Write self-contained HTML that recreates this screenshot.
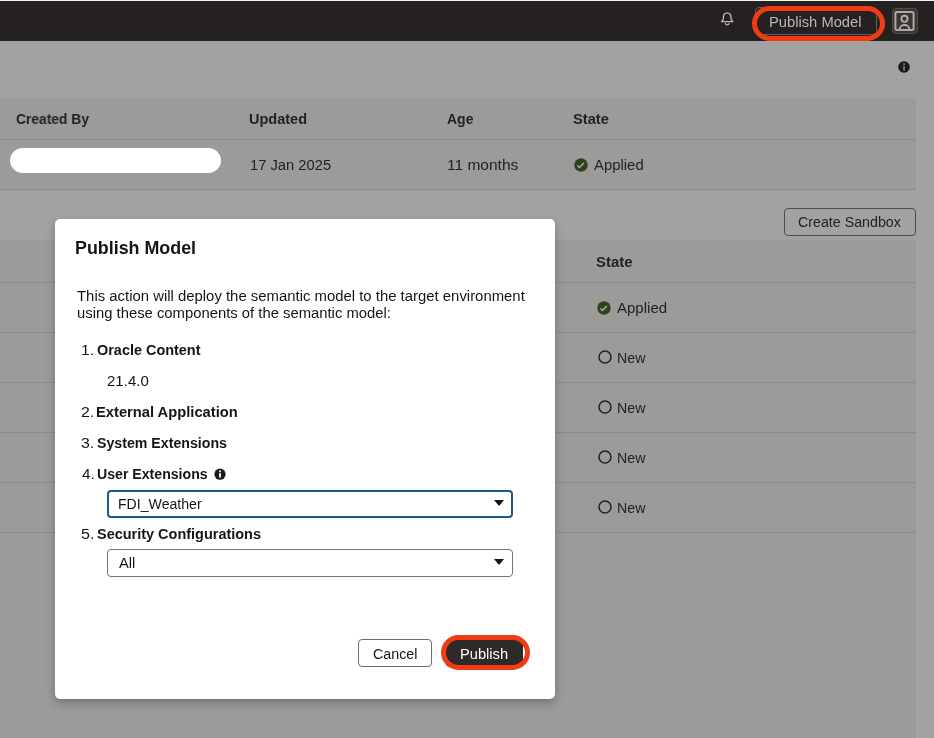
<!DOCTYPE html>
<html><head><meta charset="utf-8">
<style>
*{box-sizing:border-box;margin:0;padding:0}
html,body{width:934px;height:738px;overflow:hidden}
body{background:#a2a2a2;font-family:"Liberation Sans",sans-serif;color:#161513;position:relative;font-size:14px}
.abs{position:absolute}
.t{position:absolute;white-space:nowrap;line-height:20px;height:20px;transform-origin:0 50%;will-change:transform}
.tbl{position:absolute;left:0;width:916px;background:#9d9b99}
.hl{position:absolute;left:0;width:916px;height:1px;background:#8e8c8a}
.ring{width:14px;height:14px;border:1.5px solid #242220;border-radius:50%}
</style></head><body>
<div class="abs" style="left:0;top:0;width:934px;height:1px;background:#f4f4f4"></div>
<div class="abs" style="left:0;top:1px;width:934px;height:40px;background:#242120"></div>

<!-- bell -->
<svg class="abs" style="left:719px;top:10px" width="17" height="18" viewBox="0 0 17 18"><path d="M8.2 2.8 C5.4 2.8 4.4 5 4.4 7.2 L4.4 9 L2.7 11.7 L13.7 11.7 L12 9 L12 7.2 C12 5 11 2.8 8.2 2.8 Z" fill="none" stroke="#bdbbb9" stroke-width="1.3" stroke-linejoin="round"/><path d="M6.4 13.6 C6.8 15.3 9.6 15.3 10 13.6" fill="none" stroke="#bdbbb9" stroke-width="1.3" stroke-linecap="round"/></svg>

<!-- publish model button -->
<div class="abs" style="left:755px;top:7px;width:122px;height:28px;border:1px solid #5f5c5a;border-radius:4px"></div>
<div class="abs" style="left:752px;top:6px;width:133px;height:35px;border:5px solid #f03b14;border-radius:17.5px"></div>

<!-- avatar -->
<div class="abs" style="left:892px;top:8px;width:26px;height:26px;border:1px solid #4f4d4c;border-radius:4px;background:#393533"></div>
<svg class="abs" style="left:893px;top:9px" width="24" height="24" viewBox="0 0 24 24"><rect x="2.4" y="2.9" width="18.2" height="18.1" rx="1.5" fill="none" stroke="#acaaa8" stroke-width="2"/><circle cx="11.5" cy="9.8" r="3.1" fill="none" stroke="#acaaa8" stroke-width="1.9"/><path d="M6.6 20.4 C6.6 14.6 16.4 14.6 16.4 20.4" fill="none" stroke="#acaaa8" stroke-width="1.9"/></svg>

<!-- info icon top right -->
<svg class="abs" style="left:898px;top:61px" width="12" height="12" viewBox="0 0 12 12"><circle cx="6" cy="6" r="5.8" fill="#1b1a19"/><rect x="5.1" y="5" width="1.9" height="4.6" fill="#777"/><rect x="5.1" y="2.2" width="1.9" height="1.8" fill="#777"/></svg>

<!-- table 1 -->
<div class="tbl" style="top:98px;height:92px"></div>
<div class="hl" style="top:139px"></div>
<div class="hl" style="top:189px"></div>
<div class="abs" style="left:10px;top:148px;width:211px;height:25px;border-radius:12.5px;background:#fff"></div>
<svg class="abs" style="left:574.3px;top:157.8px" width="14" height="14" viewBox="0 0 14 14"><circle cx="7" cy="7" r="6.75" fill="#2c4419"/><path d="M3.4 7.4 L5.4 9.6 L9.9 5" fill="none" stroke="#b3b1af" stroke-width="1.4"/></svg>

<!-- create sandbox -->
<div class="abs" style="left:784px;top:208px;width:132px;height:28px;border:1px solid #504d4a;border-radius:4px"></div>

<!-- table 2 -->
<div class="tbl" style="top:240px;height:498px"></div>
<div class="hl" style="top:282px"></div>
<div class="hl" style="top:332px"></div>
<div class="hl" style="top:382px"></div>
<div class="hl" style="top:432px"></div>
<div class="hl" style="top:482px"></div>
<div class="hl" style="top:532px"></div>
<svg class="abs" style="left:597.25px;top:300.5px" width="14" height="14" viewBox="0 0 14 14"><circle cx="7" cy="7" r="6.75" fill="#2c4419"/><path d="M3.4 7.4 L5.4 9.6 L9.9 5" fill="none" stroke="#b3b1af" stroke-width="1.4"/></svg>
<svg class="abs" style="left:596.60px;top:348.90px" width="16" height="16" viewBox="0 0 16 16"><circle cx="8" cy="8" r="6.0" fill="none" stroke="#242220" stroke-width="1.5"/></svg>
<svg class="abs" style="left:596.60px;top:398.90px" width="16" height="16" viewBox="0 0 16 16"><circle cx="8" cy="8" r="6.0" fill="none" stroke="#242220" stroke-width="1.5"/></svg>
<svg class="abs" style="left:596.60px;top:448.90px" width="16" height="16" viewBox="0 0 16 16"><circle cx="8" cy="8" r="6.0" fill="none" stroke="#242220" stroke-width="1.5"/></svg>
<svg class="abs" style="left:596.60px;top:498.90px" width="16" height="16" viewBox="0 0 16 16"><circle cx="8" cy="8" r="6.0" fill="none" stroke="#242220" stroke-width="1.5"/></svg>

<!-- dialog -->
<div class="abs" style="left:55px;top:219px;width:500px;height:480px;background:#fff;border-radius:5px;box-shadow:0 4px 10px rgba(0,0,0,.26)"></div>
<svg class="abs" style="left:214px;top:468px" width="12" height="12" viewBox="0 0 12 12"><circle cx="6" cy="6.2" r="5.6" fill="#1b1a19"/><rect x="5.1" y="5.2" width="1.8" height="4.4" fill="#fff"/><rect x="5.1" y="2.5" width="1.8" height="1.7" fill="#fff"/></svg>

<div class="abs" style="left:107px;top:490px;width:406px;height:28px;border:2px solid #1f5a86;border-radius:4px;background:#fff"></div>
<svg class="abs" style="left:494px;top:500px" width="10" height="6" viewBox="0 0 11 6" preserveAspectRatio="none"><path d="M0 0 L11 0 L5.5 6 Z" fill="#161513"/></svg>
<div class="abs" style="left:107px;top:549px;width:406px;height:28px;border:1px solid #757371;border-radius:4px;background:#fff"></div>
<svg class="abs" style="left:494px;top:559px" width="10" height="6" viewBox="0 0 11 6" preserveAspectRatio="none"><path d="M0 0 L11 0 L5.5 6 Z" fill="#161513"/></svg>

<!-- buttons -->
<div class="abs" style="left:358px;top:639px;width:74px;height:28px;border:1px solid #6f6c69;border-radius:4px;background:#fff"></div>
<div class="abs" style="left:446px;top:639px;width:77px;height:28px;border-radius:4px;background:#2e2a28"></div>
<div class="abs" style="left:441px;top:635px;width:89px;height:35px;border:5px solid #f03b14;border-radius:17.5px"></div>
<div class="t" style="left:769.00px;top:12.00px;font-size:14px;color:#b9b7b5;transform:scaleX(1.0517)">Publish Model</div>
<div class="t" style="left:16.00px;top:109.00px;font-size:14px;font-weight:bold;color:#242220;transform:scaleX(0.9868)">Created By</div>
<div class="t" style="left:249.00px;top:109.00px;font-size:14px;font-weight:bold;color:#242220;transform:scaleX(1.0360)">Updated</div>
<div class="t" style="left:447.00px;top:109.00px;font-size:14px;font-weight:bold;color:#242220;transform:scaleX(0.9944)">Age</div>
<div class="t" style="left:573.00px;top:109.00px;font-size:14px;font-weight:bold;color:#242220;transform:scaleX(1.0484)">State</div>
<div class="t" style="left:250.00px;top:155.00px;font-size:14px;color:#242220;transform:scaleX(1.0520)">17 Jan 2025</div>
<div class="t" style="left:447.00px;top:155.00px;font-size:14px;color:#242220;transform:scaleX(1.1085)">11 months</div>
<div class="t" style="left:594.00px;top:155.00px;font-size:14px;color:#242220;transform:scaleX(1.0633)">Applied</div>
<div class="t" style="left:798.00px;top:212.00px;font-size:14px;color:#242220;transform:scaleX(1.0166)">Create Sandbox</div>
<div class="t" style="left:596.00px;top:252.00px;font-size:14px;font-weight:bold;color:#242220;transform:scaleX(1.0665)">State</div>
<div class="t" style="left:617.00px;top:298.00px;font-size:14px;color:#242220;transform:scaleX(1.0726)">Applied</div>
<div class="t" style="left:617.00px;top:348.00px;font-size:14px;color:#242220;transform:scaleX(1.0131)">New</div>
<div class="t" style="left:617.00px;top:398.00px;font-size:14px;color:#242220;transform:scaleX(1.0131)">New</div>
<div class="t" style="left:617.00px;top:448.00px;font-size:14px;color:#242220;transform:scaleX(1.0131)">New</div>
<div class="t" style="left:617.00px;top:498.00px;font-size:14px;color:#242220;transform:scaleX(1.0131)">New</div>
<div class="t" style="left:75.00px;top:238.00px;font-size:17.5px;font-weight:bold;color:#161513;transform:scaleX(1.0208)">Publish Model</div>
<div class="t" style="left:77.00px;top:286.00px;font-size:14px;color:#161513;transform:scaleX(1.0636)">This action will deploy the semantic model to the target environment</div>
<div class="t" style="left:77.00px;top:303.00px;font-size:14px;color:#161513;transform:scaleX(1.0588)">using these components of the semantic model:</div>
<div class="t" style="left:81.00px;top:340.00px;font-size:14px;color:#161513;transform:scaleX(1.1183)">1.</div>
<div class="t" style="left:97.00px;top:340.00px;font-size:14px;font-weight:bold;color:#161513;transform:scaleX(1.0314)">Oracle Content</div>
<div class="t" style="left:107.00px;top:371.00px;font-size:14px;color:#161513;transform:scaleX(1.0727)">21.4.0</div>
<div class="t" style="left:81.00px;top:402.00px;font-size:14px;color:#161513;transform:scaleX(1.1374)">2.</div>
<div class="t" style="left:96.00px;top:402.00px;font-size:14px;font-weight:bold;color:#161513;transform:scaleX(1.0510)">External Application</div>
<div class="t" style="left:81.00px;top:433.00px;font-size:14px;color:#161513;transform:scaleX(1.1352)">3.</div>
<div class="t" style="left:97.00px;top:433.00px;font-size:14px;font-weight:bold;color:#161513;transform:scaleX(1.0119)">System Extensions</div>
<div class="t" style="left:82.00px;top:464.00px;font-size:14px;color:#161513;transform:scaleX(1.0962)">4.</div>
<div class="t" style="left:97.00px;top:464.00px;font-size:14px;font-weight:bold;color:#161513;transform:scaleX(1.0085)">User Extensions</div>
<div class="t" style="left:118.00px;top:494.00px;font-size:14px;color:#161513;transform:scaleX(1.0081)">FDI_Weather</div>
<div class="t" style="left:81.00px;top:524.00px;font-size:14px;color:#161513;transform:scaleX(1.1501)">5.</div>
<div class="t" style="left:97.00px;top:524.00px;font-size:14px;font-weight:bold;color:#161513;transform:scaleX(1.0335)">Security Configurations</div>
<div class="t" style="left:119.00px;top:553.00px;font-size:14px;color:#161513;transform:scaleX(1.0507)">All</div>
<div class="t" style="left:373.00px;top:644.00px;font-size:14px;color:#161513;transform:scaleX(1.0184)">Cancel</div>
<div class="t" style="left:460.00px;top:644.00px;font-size:14px;color:#ffffff;transform:scaleX(1.0479)">Publish</div>
</body></html>
